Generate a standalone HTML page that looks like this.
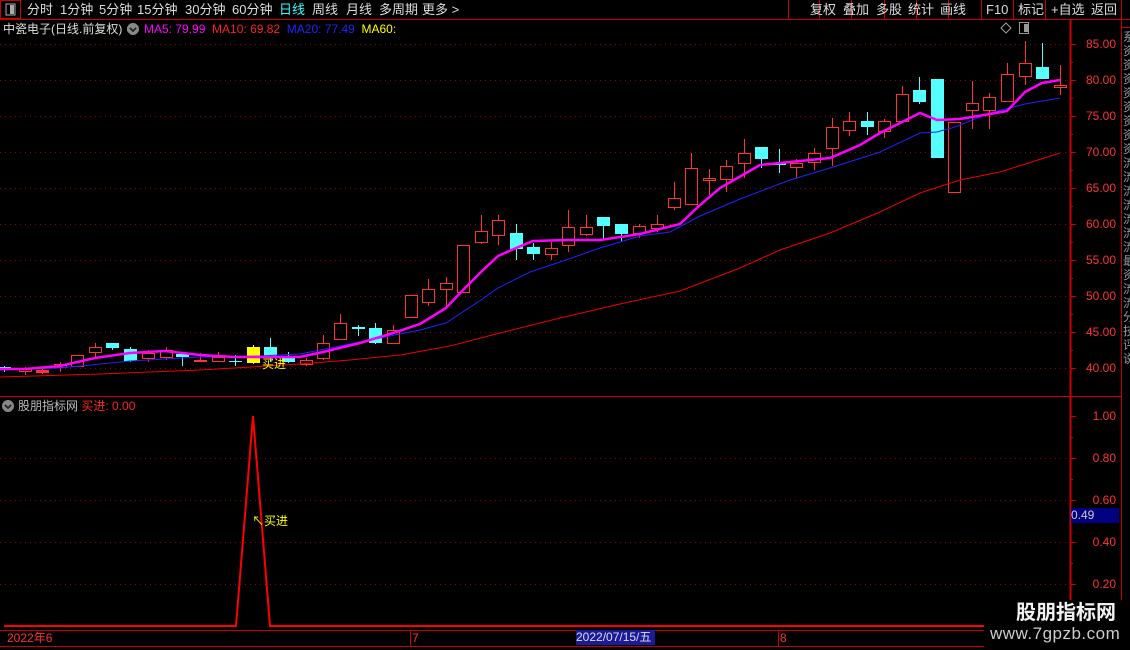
<!DOCTYPE html>
<html><head><meta charset="utf-8">
<style>
html,body{margin:0;padding:0;background:#000;width:1130px;height:650px;overflow:hidden}
body{position:relative;font-family:"Liberation Sans","Noto Sans CJK SC",sans-serif;color:#ccc}
.t{position:absolute;white-space:nowrap;font-size:13px;line-height:16px}
.b{position:absolute;white-space:nowrap;font-size:13px;line-height:16px;top:2px;color:#ddd}
svg{position:absolute;left:0;top:0}
</style></head><body>
<svg id="s" width="1130" height="650" xmlns="http://www.w3.org/2000/svg" shape-rendering="crispEdges"></svg>

<div class="b" style="left:27px">分时</div>
<div class="b" style="left:60px">1分钟</div>
<div class="b" style="left:99px">5分钟</div>
<div class="b" style="left:137px">15分钟</div>
<div class="b" style="left:185px">30分钟</div>
<div class="b" style="left:232px">60分钟</div>
<div class="b" style="left:279px;color:#3ff">日线</div>
<div class="b" style="left:312px">周线</div>
<div class="b" style="left:346px">月线</div>
<div class="b" style="left:379px">多周期</div>
<div class="b" style="left:422px">更多 &gt;</div>
<div class="b" style="left:810px">复权</div>
<div class="b" style="left:843px">叠加</div>
<div class="b" style="left:876px">多股</div>
<div class="b" style="left:908px">统计</div>
<div class="b" style="left:940px">画线</div>
<div class="b" style="left:986px">F10</div>
<div class="b" style="left:1018px">标记</div>
<div class="b" style="left:1051px">+自选</div>
<div class="b" style="left:1091px">返回</div>

<div class="t" style="left:3px;top:21px;font-size:12px;color:#ddd">中瓷电子(日线.前复权)</div>
<div class="t" style="left:144px;top:21px;font-size:12px"><span style="color:#f0f">MA5: 79.99</span>&nbsp; <span style="color:#f22">MA10: 69.82</span>&nbsp; <span style="color:#22f">MA20: 77.49</span>&nbsp; <span style="color:#ff0">MA60:</span></div>

<div class="t" style="left:18px;top:398px;font-size:12px;color:#bbb">股朋指标网 <span style="color:#f22">买进: 0.00</span></div>

<div class="t" style="left:262px;top:356px;font-size:12px;color:#ff0">买进</div>
<div class="t" style="left:252px;top:513px;font-size:12px;color:#ff0">↖买进</div>

<div id="ax"></div>
<div class="t" style="left:1071px;top:508px;width:48px;height:15px;background:#000080;color:#ccc;font-size:12px;line-height:15px">0.49</div>

<div class="t" style="left:7px;top:631px;font-size:12px;color:#f33;line-height:14px">2022年6</div>
<div class="t" style="left:412px;top:631px;font-size:12px;color:#f33;line-height:14px">7</div>
<div class="t" style="left:576px;top:630px;width:79px;height:15px;background:#1a1a9a;color:#ddd;font-size:12px;line-height:15px">2022/07/15/五</div>
<div class="t" style="left:780px;top:631px;font-size:12px;color:#f33;line-height:14px">8</div>

<div style="position:absolute;left:984px;top:600px;width:146px;height:50px;background:#000"></div>
<div class="t" style="left:1016px;top:601px;font-size:20px;line-height:24px;font-weight:bold;color:#f2f2f2">股朋指标网</div>
<div class="t" style="left:990px;top:624px;font-size:17px;line-height:20px;color:#ccc;letter-spacing:0.5px">www.7gpzb.com</div>

<div style="position:absolute;left:1123px;top:30px;width:7px;height:360px;overflow:hidden;color:#999;font-size:12px;line-height:14px;word-break:break-all">系资资资资资资资资流流流流流流流最资流流分技评说</div>

<script>
const s=document.getElementById('s');let h='';
const L=(x1,y1,x2,y2,c,w,d)=>h+=`<line x1="${x1}" y1="${y1}" x2="${x2}" y2="${y2}" stroke="${c}" stroke-width="${w||1}" ${d?'stroke-dasharray="'+d+'"':''}/>`;
const R=(x,y,w,hh,f,st)=>h+=`<rect x="${x}" y="${y}" width="${w}" height="${hh}" fill="${f}" ${st?'stroke="'+st+'"':''}/>`;
L(0,19.5,1130,19.5,'#c00');
R(0.5,0.5,20,18,'none','#c00');R(6,4,9,11,'none','#aaa');R(10,5,4,9,'#aaa');
[788,819,851,884,916,948,981,1013,1045,1121].forEach(x=>L(x+.5,0,x+.5,19,'#c00'));
L(1070.5,19,1070.5,630,'#c00',2);L(1121.5,19,1121.5,646,'#c00');L(1121,27.5,1130,27.5,'#c00');
L(0,396.5,1121,396.5,'#c00');L(0,630.5,1121,630.5,'#c00');L(0,646.5,1130,646.5,'#c00');
L(410.5,631,410.5,646,'#c00');L(778.5,631,778.5,646,'#c00');
for(let p=85;p>=40;p-=5){const y=Math.round(44+(85-p)*7.2)+.5;L(0,y,1068,y,'#900',1,'1 4');L(1070,y,1076,y,'#c00');}
for(let p=42.5;p<=85;p+=5){const y=Math.round(44+(85-p)*7.2)+.5;L(1070,y,1073,y,'#c00');}
[458,500,542,584].forEach(y=>L(0,y+.5,1068,y+.5,'#900',1,'1 4'));
[416,458,500,542,584].forEach(y=>L(1070,y+.5,1076,y+.5,'#c00'));
[437,479,521,563,605].forEach(y=>L(1070,y+.5,1073,y+.5,'#c00'));
h+=`<circle cx="133" cy="29" r="6" fill="#888"/><path d="M130 28l3 3 3-3" stroke="#222" fill="none" stroke-width="1.5"/>`;
h+=`<circle cx="8" cy="406" r="6" fill="#888"/><path d="M5 405l3 3 3-3" stroke="#222" fill="none" stroke-width="1.5"/>`;
h+=`<path d="M1006 23l5 5-5 5-5-5z" fill="none" stroke="#999"/>`;R(1019.5,22.5,9,11,'none','#999');R(1024,24,4,8,'#999');
const C=[[4,367,369,366,372,'d'],[25,369,371,367,375,'u'],[42,370,373,369,374,'f'],[60,364,367,362,372,'u'],[77,355,366,355,366,'u'],[95,347,352,343,357,'u'],[112,343,348,343,350,'d'],[130,349,361,347,362,'d'],[148,353,358,350,362,'u'],[166,350,357,347,360,'u'],[182,354,357,353,366,'d'],[200,360,362,353,362,'f'],[218,357,361,352,362,'u'],[235,361,362,355,366,'d'],[253,347,363,345,364,'y'],[270,347,356,338,362,'d'],[288,357,362,352,363,'d'],[306,360,364,358,366,'u'],
[323,343,358,335,360,'u'],[340,323,339,314,340,'u'],[358,327,329,325,336,'d'],[375,328,343,323,344,'d'],[393,330,343,325,344,'u'],[411,295,317,295,317,'u'],[428,289,302,279,306,'u'],[446,283,289,277,306,'u'],[463,245,292,245,292,'u'],[481,231,242,215,244,'u'],[498,220,235,215,245,'u'],[516,233,249,224,260,'d'],[533,247,254,243,260,'d'],[551,248,254,242,260,'u'],[568,227,245,210,252,'u'],[586,227,234,215,236,'u'],[603,217,226,217,239,'d'],[621,224,234,224,242,'d'],[639,226,233,224,238,'u'],[657,224,228,215,232,'u'],[674,198,207,182,210,'u'],[691,168,204,153,204,'u'],
[709,178,180,169,195,'u'],[726,166,179,160,192,'u'],[744,153,163,139,178,'u'],[761,147,159,147,168,'d'],[779,163,165,149,173,'d'],[796,163,167,159,178,'u'],[814,153,162,148,170,'u'],[832,127,148,118,166,'u'],[849,121,130,112,136,'u'],[867,121,127,112,135,'d'],[884,121,131,119,138,'u'],[902,94,121,86,122,'u'],[919,90,102,77,104,'d'],[937,79,158,79,158,'d'],[954,122,192,122,192,'u'],[972,103,110,81,129,'u'],[989,97,110,93,129,'u'],[1007,74,101,63,101,'u'],[1025,63,76,41,85,'u'],[1042,67,79,43,79,'d'],[1060,85,87,65,95,'u']];
C.forEach(([x,t,b,hi,lo,k])=>{const col=k=='d'?'#55ffff':k=='y'?'#ffff00':'#ff3333';
 L(x+.5,hi,x+.5,lo,col);
 if(k=='u'){R(x-5.5,t+.5,12,Math.max(b-t,1),'#000',col);}else R(x-6,t,13,Math.max(b-t,1),col);});
const P=(pts,c,w)=>h+=`<polyline points="${pts.map(p=>p.join(',')).join(' ')}" fill="none" stroke="${c}" stroke-width="${w}" shape-rendering="auto"/>`;
P([[0,377],[100,374],[200,370],[300,364],[350,360],[400,355],[450,346],[500,333],[560,318],[620,304],[680,291],[740,268],[780,250],[830,233],[880,212],[920,193],[960,180],[1000,172],[1060,153]],'#e00',1);
P([[0,370],[60,368],[130,361],[200,357],[260,356],[300,354],[330,348],[380,338],[420,330],[446,323],[481,300],[498,288],[530,272],[560,262],[600,248],[640,236],[670,232],[700,216],[740,199],[790,180],[830,168],[880,152],[920,133],[937,132],[955,127],[990,113],[1025,104],[1060,98]],'#22f',1);
P([[0,369],[25,369],[60,366],[95,358],[130,353],[165,351],[200,355],[235,357],[270,357],[300,357],[323,352],[360,343],[393,333],[420,324],[446,308],[463,290],[481,272],[498,256],[516,248],[533,241],[568,240],[600,240],[640,234],[680,224],[700,205],[720,188],[760,165],[800,161],[830,158],[860,145],[880,133],[920,113],[937,120],[960,119],[990,114],[1007,111],[1025,92],[1042,83],[1060,80]],'#ff00ff',2.5);
P([[4,626],[236,626],[253,416],[270,626],[1068,626]],'#f00',2);
s.innerHTML=h;
let a='';
for(let p=85;p>=40;p-=5){const y=Math.round(44+(85-p)*7.2);a+=`<div class="t" style="left:1080px;width:36px;text-align:right;top:${y-8}px;color:#ff3333;font-size:12px">${p}.00</div>`;}
[['1.00',416],['0.80',458],['0.60',500],['0.40',542],['0.20',584]].forEach(([v,y])=>a+=`<div class="t" style="left:1080px;width:36px;text-align:right;top:${y-8}px;color:#ff3333;font-size:12px">${v}</div>`);
document.getElementById('ax').innerHTML=a;
</script>
</body></html>
